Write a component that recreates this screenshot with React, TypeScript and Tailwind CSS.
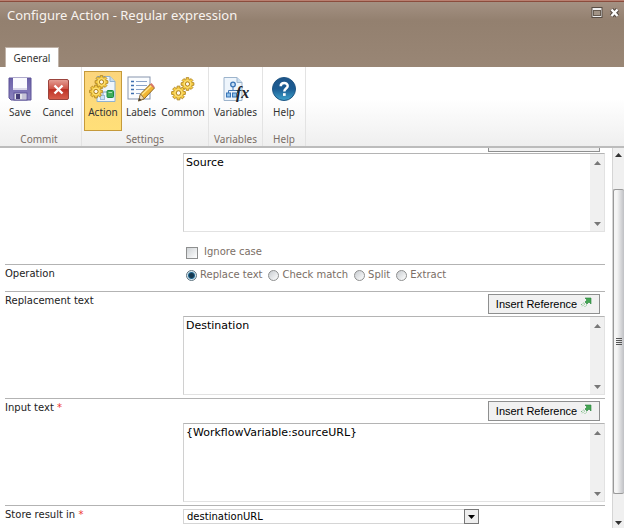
import type { ReactNode } from "react";

const ui = "font-['Noto_Sans','Open_Sans',sans-serif]";
const form = "font-['DejaVu_Sans',sans-serif]";

function SaveIcon() {
  return (
    <svg viewBox="0 0 26 26" className="h-[26px] w-[26px]" aria-hidden="true">
      <defs>
        <linearGradient id="save" x1="0" y1="0" x2="0" y2="1">
          <stop offset="0" stopColor="#6a60a8" />
          <stop offset="1" stopColor="#8c84bf" />
        </linearGradient>
      </defs>
      <path d="M2 2h22v22H4l-2-2z" fill="url(#save)" stroke="#5c5297" />
      <rect x="6" y="2" width="14" height="12" fill="#fafafe" />
      <path d="M6 12h14v2H6z" fill="#d9d7e8" />
      <rect x="7" y="17" width="13" height="7" fill="#e3e3e9" stroke="#5c5297" />
      <rect x="9" y="18" width="4" height="5" fill="#453d78" />
      <path d="M15 18h4v5h-4z" fill="#c6c4d8" />
    </svg>
  );
}

function CancelIcon() {
  return (
    <svg viewBox="0 0 26 26" className="h-[26px] w-[26px]" aria-hidden="true">
      <defs>
        <linearGradient id="cancel" x1="0" y1="0" x2="0" y2="1">
          <stop offset="0" stopColor="#e5a197" />
          <stop offset="0.45" stopColor="#cf5548" />
          <stop offset="0.5" stopColor="#bd3125" />
          <stop offset="1" stopColor="#d8604d" />
        </linearGradient>
      </defs>
      <rect x="3.5" y="3.5" width="20" height="20" rx="1.5" fill="url(#cancel)" stroke="#9b443d" />
      <path d="M9.5 9.5l8 8M17.5 9.5l-8 8" stroke="#fff" strokeWidth="2.4" />
    </svg>
  );
}

const teeth = 8;

function gearPath(r: number) {
  const points: string[] = [];
  for (let i = 0; i < teeth; i++) {
    const centre = (i * 2 * Math.PI) / teeth;
    const corners: [number, number][] = [
      [-0.3, r * 0.74],
      [-0.2, r],
      [0.2, r],
      [0.3, r * 0.74],
    ];
    for (const [offset, radius] of corners) {
      const a = centre + offset;
      points.push(`${(Math.cos(a) * radius).toFixed(2)} ${(Math.sin(a) * radius).toFixed(2)}`);
    }
  }
  return `M${points.join("L")}Z`;
}

function Gear({ x, y, r }: { x: number; y: number; r: number }) {
  return (
    <g transform={`translate(${x} ${y})`}>
      <path d={gearPath(r)} fill="#f6cb42" stroke="#b08420" strokeWidth=".9" strokeLinejoin="round" />
      <circle r={r * 0.52} fill="none" stroke="#fde68a" strokeWidth=".9" />
      <circle r={r * 0.32} fill="#fffaf0" stroke="#a97b15" strokeWidth=".9" />
    </g>
  );
}

function ActionIcon() {
  return (
    <svg viewBox="0 0 28 28" className="h-7 w-7" aria-hidden="true">
      <path d="M8 1.500h13l5 5v20H8z" fill="#eef5fc" stroke="#8fb1d0" />
      <path d="M21 1.500v5h5" fill="#c4daee" stroke="#8fb1d0" />
      <path d="M14 22v-5h5" fill="none" stroke="#82a2c8" />
      <rect x="11.500" y="20.500" width="4" height="4" fill="#cfe2f4" stroke="#9cbcdc" />
      <rect x="18" y="15.500" width="6.500" height="7" rx="1" fill="#3fae5c" stroke="#1c8a3e" />
      <path d="M19.500 17.500h3.500" stroke="#a8e0b6" />
      <Gear x={12.500} y={7} r={6.500} />
      <Gear x={7} y={16.500} r={6.500} />
    </svg>
  );
}

function LabelsIcon() {
  return (
    <svg viewBox="0 0 28 28" className="h-7 w-7" aria-hidden="true">
      <rect x="1" y="2" width="22" height="22" fill="#fbfdff" stroke="#8795ae" />
      <path d="M4 6.500h3M4 10.500h3M4 14.500h3M4 18.500h3" stroke="#3e6fb0" strokeWidth="1.500" />
      <path d="M9 6.500h11M9 10.500h11M9 14.500h9M9 18.500h4" stroke="#8aa3c8" />
      <path d="M11.500 26l2-7L23.500 9l4 4-10.500 11z" fill="#f2b632" stroke="#8a6524" />
      <path d="M15 19.500L24.500 10.500" stroke="#ffe48c" strokeWidth="1.500" />
      <path d="M23 9.500l1.500-1.500 3 3.500L26.500 13z" fill="#d87768" />
      <path d="M11.500 26l2-7 3.700 4.500z" fill="#f3dab0" stroke="#7a6140" strokeWidth=".7" />
      <path d="M11.500 26l.9-3 1.800 2z" fill="#333" />
    </svg>
  );
}

function CommonIcon() {
  return (
    <svg viewBox="0 0 26 26" className="h-[26px] w-[26px]" aria-hidden="true">
      <Gear x={17.500} y={8} r={6.500} />
      <Gear x={8.500} y={17} r={7} />
    </svg>
  );
}

function VariablesIcon() {
  return (
    <svg viewBox="0 0 28 28" className="h-7 w-7" aria-hidden="true">
      <path d="M2 2.500h13l5 5v18H2z" fill="#eef5fc" stroke="#9db4cc" />
      <path d="M15 2.500v5h5" fill="#cadef0" stroke="#9db4cc" />
      <path d="M11 11v5M6.500 18v-2.500h9V18" fill="none" stroke="#4779b4" />
      <circle cx="11" cy="9.500" r="2.300" fill="#c6def4" stroke="#3974b6" strokeWidth="1.300" />
      <rect x="4.500" y="18" width="4" height="4" fill="#8fc0ea" stroke="#3974b6" />
      <rect x="10.500" y="18" width="4" height="4" fill="#8fc0ea" stroke="#3974b6" />
      <text x="14" y="23" fontFamily="Liberation Serif, serif" fontStyle="italic" fontWeight="700" fontSize="16" fill="#20242b">
        fx
      </text>
    </svg>
  );
}

function HelpIcon() {
  return (
    <svg viewBox="0 0 26 26" className="h-[26px] w-[26px]" aria-hidden="true">
      <defs>
        <linearGradient id="help" x1="0" y1="0" x2="0" y2="1">
          <stop offset="0" stopColor="#1e5589" />
          <stop offset="0.500" stopColor="#1b5c93" />
          <stop offset="1" stopColor="#3fa3cc" />
        </linearGradient>
      </defs>
      <circle cx="13" cy="13" r="11.500" fill="url(#help)" stroke="#1f5583" />
      <path d="M9.700 10.200c0-4.300 7-4.300 7-.3 0 2.700-3.400 2.700-3.400 5.600" fill="none" stroke="#fff" strokeWidth="2.500" />
      <rect x="12" y="17.200" width="2.700" height="2.700" fill="#fff" />
    </svg>
  );
}

function RibbonButton({ icon, label, width, active = false }: { icon: ReactNode; label: string; width: string; active?: boolean }) {
  return (
    <button
      type="button"
      aria-pressed={active}
      className={`flex h-[60px] flex-col items-center border pt-[3px] ${width} ${
        active ? "border-[#c59a3b] bg-linear-to-b from-[#fbd57c] to-[#ffdf78]" : "border-transparent"
      }`}
    >
      <span className="flex h-7 items-center">{icon}</span>
      <span className="mt-[2px] text-[10px] leading-[14px] text-[#333]">{label}</span>
    </button>
  );
}

function RibbonGroup({ label, width, children }: { label: string; width: string; children: ReactNode }) {
  return (
    <section aria-label={label} className={`flex flex-col items-center justify-between border-r border-[#e3e3e3] pt-1 ${width}`}>
      <div className="flex">{children}</div>
      <span className="text-[10px] leading-[14px] text-[#7a6e66]">{label}</span>
    </section>
  );
}

function Triangle({ up = false, color = "fill-[#777]" }: { up?: boolean; color?: string }) {
  return (
    <svg viewBox="0 0 7 4" className={`h-1 w-[7px] ${color}`} aria-hidden="true">
      <path d={up ? "M0 4L3.500 0 7 4z" : "M0 0h7L3.500 4z"} />
    </svg>
  );
}

function TextBox({ id, label, value }: { id: string; label: string; value: string }) {
  return (
    <div className="flex h-[79px] border border-t-[#b4b4b4] border-r-[#e2e2e2] border-b-[#e2e2e2] border-l-[#d0d0d0] bg-white">
      <textarea
        id={id}
        aria-label={label}
        defaultValue={value}
        className="min-w-0 flex-1 resize-none overflow-hidden px-[2px] py-[1px] text-[11px] leading-[15px] text-black outline-none"
      />
      <div className="flex w-[14px] flex-col items-center justify-between bg-[#f0f0f0] pt-[7px] pb-[5px]">
        <Triangle up />
        <Triangle />
      </div>
    </div>
  );
}

function InsertReference() {
  return (
    <button
      type="button"
      className="flex h-5 w-28 shrink-0 items-center justify-center gap-1 border border-[#8e8f8f] bg-[#f1f1f1] font-['Liberation_Sans',Arial,sans-serif] text-[11px] text-black"
    >
      Insert Reference
      <svg viewBox="0 0 11 11" className="mb-1 h-[11px] w-[11px]" aria-hidden="true">
        <path d="M4 1h6v6L8 5 6 7 4 5l2-2z" fill="#45a653" stroke="#27803a" strokeWidth=".6" />
        <path d="M4 6.500L1 9.500M6 7.500l-2.500 2.500M2.500 6L0 8" stroke="#4aa657" strokeDasharray="1 1" />
      </svg>
    </button>
  );
}

function Row({ label, htmlFor, required = false, children }: { label: string; htmlFor?: string; required?: boolean; children: ReactNode }) {
  return (
    <div className="flex border-t border-[#b3b3b3]">
      <label htmlFor={htmlFor} className="w-[178px] shrink-0 pt-[2px] text-[10px] leading-[14px] text-[#222]">
        {label}
        {required && <span className="text-[#e33]"> *</span>}
      </label>
      <div className="min-w-0 flex-1">{children}</div>
    </div>
  );
}

const operations = ["Replace text", "Check match", "Split", "Extract"];

export default function App() {
  return (
    <div className={`flex h-screen flex-col overflow-hidden bg-white ${form}`}>
      <header className={`flex h-[67px] shrink-0 flex-col justify-between border-t border-[#b97f70] bg-linear-to-b from-[#a59284] via-[#93806f] via-30% to-[#998675] ${ui}`}>
        <div className="flex items-start justify-between border-t border-[#8b4c3d] pr-[3px] pl-[7px]">
          <h1 className="pt-1 text-[13px] leading-[18px] text-[#f8f3ef]">Configure Action - Regular expression</h1>
          <div className="flex gap-[6px] pt-[5px]">
            <button type="button" aria-label="Maximize">
              <svg viewBox="0 0 12 12" className="h-3 w-3" aria-hidden="true">
                <rect x="1" y=".5" width="10" height="10" fill="#eee" stroke="#574c44" />
                <rect x="2.500" y="3.500" width="7" height="5" fill="#a19386" stroke="#675b50" />
              </svg>
            </button>
            <button type="button" aria-label="Close">
              <svg viewBox="0 0 12 12" className="h-3 w-3" aria-hidden="true">
                <path d="M2.500 2.500l6 6.500M8.500 2.500l-6 6.500" stroke="#574c44" strokeWidth="4.500" />
                <path d="M2.500 2.500l6 6.500M8.500 2.500l-6 6.500" stroke="#fff" strokeWidth="2.400" />
              </svg>
            </button>
          </div>
        </div>
        <nav className="flex pl-[5px]">
          <button type="button" className="h-5 w-[54px] border border-b-0 border-[#c0b3a8] bg-white text-[10px] leading-[20px] text-[#333]">
            General
          </button>
        </nav>
      </header>

      <div className={`flex h-[81px] shrink-0 border-b-2 border-[#bcbcbc] bg-linear-to-b from-white from-40% to-[#efefef] ${ui}`}>
        <RibbonGroup label="Commit" width="w-[82px] pr-[3px]">
          <RibbonButton icon={<SaveIcon />} label="Save" width="w-[38px]" />
          <RibbonButton icon={<CancelIcon />} label="Cancel" width="w-[38px]" />
        </RibbonGroup>
        <RibbonGroup label="Settings" width="w-[127px]">
          <RibbonButton icon={<ActionIcon />} label="Action" width="w-[38px]" active />
          <RibbonButton icon={<LabelsIcon />} label="Labels" width="w-[38px]" />
          <RibbonButton icon={<CommonIcon />} label="Common" width="w-[46px]" />
        </RibbonGroup>
        <RibbonGroup label="Variables" width="w-[54px]">
          <RibbonButton icon={<VariablesIcon />} label="Variables" width="w-[50px]" />
        </RibbonGroup>
        <RibbonGroup label="Help" width="w-[43px]">
          <RibbonButton icon={<HelpIcon />} label="Help" width="w-[40px]" />
        </RibbonGroup>
      </div>

      <div className="flex min-h-0 flex-1">
        <main className="min-w-0 flex-1 overflow-hidden pr-[7px] pl-[5px]">
          <div className="pl-[178px]">
            <div className="flex justify-end pr-[5px] pb-[1px]">
              <button type="button" aria-label="Insert Reference" className="h-1 w-28 border border-t-0 border-[#8e8f8f] bg-[#f1f1f1]" />
            </div>
            <TextBox id="pattern" label="Pattern" value="Source" />
            <label className="flex h-8 items-end gap-[6px] pb-[5px] pl-[3px] text-[10px] leading-[14px] text-[#7a6e66]">
              <input type="checkbox" className="h-3 w-3 appearance-none border border-[#8e8f8f] bg-linear-to-br from-[#cfd3d6] to-white" />
              Ignore case
            </label>
          </div>

          <Row label="Operation">
            <div role="radiogroup" aria-label="Operation" className="flex h-[26px] items-center gap-[6px] pb-[6px] pl-[3px]">
              {operations.map((name, i) => (
                <label key={name} className="flex items-center gap-[3px] text-[10px] leading-[14px] text-[#7a6e66]">
                  <input
                    type="radio"
                    name="operation"
                    defaultChecked={i === 0}
                    className="h-[11px] w-[11px] appearance-none rounded-full border border-[#8e8f8f] bg-linear-to-br from-[#c8ccd0] to-white checked:border-[#5f7480] checked:bg-[radial-gradient(circle,#16384f_0_2px,#1f658f_3px,#d4e6ef_4px)]"
                  />
                  {name}
                </label>
              ))}
            </div>
          </Row>

          <Row label="Replacement text" htmlFor="replacement">
            <div className="flex justify-end pt-[2px] pr-[5px] pb-[2px]">
              <InsertReference />
            </div>
            <div className="pb-[3px]">
              <TextBox id="replacement" label="Replacement text" value="Destination" />
            </div>
          </Row>

          <Row label="Input text" htmlFor="input" required>
            <div className="flex justify-end pt-[2px] pr-[5px] pb-[2px]">
              <InsertReference />
            </div>
            <div className="pb-[3px]">
              <TextBox id="input" label="Input text" value="{WorkflowVariable:sourceURL}" />
            </div>
          </Row>

          <Row label="Store result in" htmlFor="result" required>
            <div className="relative mt-[3px] h-[15px] w-[296px]">
              <select id="result" className="block h-full w-full appearance-none border border-[#d5d5d5] bg-white pl-[3px] text-[10px] leading-[13px] text-black outline-none">
                <option>destinationURL</option>
              </select>
              <span className="pointer-events-none absolute top-0 right-0 flex h-full w-[15px] items-center justify-center border border-[#777] bg-[#eee]">
                <Triangle color="fill-black" />
              </span>
            </div>
          </Row>
        </main>

        <div className="flex w-3 shrink-0 flex-col border-l border-[#d5d5d5] bg-[#f0f0f0]">
          <div className="flex h-[41px] shrink-0 justify-center pt-[5px]">
            <Triangle up color="fill-[#333]" />
          </div>
          <div className="flex flex-1 flex-col items-center justify-center gap-[1px] rounded-[2px] border border-r-0 border-[#999] bg-linear-to-r from-[#f5f5f5] from-30% to-[#bfc0c4]">
            <span className="h-px w-[6px] bg-[#555]" />
            <span className="h-px w-[6px] bg-[#555]" />
            <span className="h-px w-[6px] bg-[#555]" />
            <span className="h-px w-[6px] bg-[#555]" />
          </div>
          <div className="flex h-[34px] shrink-0 items-end justify-center pb-[3px]">
            <Triangle color="fill-[#333]" />
          </div>
        </div>
      </div>
    </div>
  );
}
